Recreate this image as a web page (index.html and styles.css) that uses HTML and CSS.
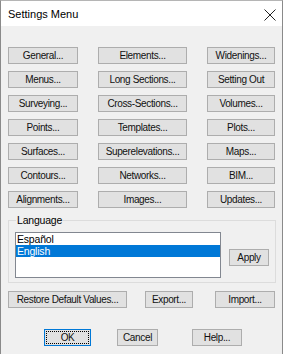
FILE: index.html
```html
<!DOCTYPE html>
<html lang="en">
<head>
    <meta charset="UTF-8">
    <title>Settings Menu</title>
    <link rel="stylesheet" href="styles.css">
</head>
<body>
    <div class="window">
        <div class="titlebar">
            <span class="title">Settings Menu</span>
            <svg class="close" width="12" height="12" viewBox="0 0 12 12">
                <path d="M0.5 0.5 L11.5 11.5 M11.5 0.5 L0.5 11.5" stroke="#222" stroke-width="1" fill="none"/>
            </svg>
        </div>

        <div class="content">
            <div class="menu-grid">
                <button class="btn">General...</button>
                <button class="btn">Elements...</button>
                <button class="btn">Widenings...</button>
                <button class="btn">Menus...</button>
                <button class="btn">Long Sections...</button>
                <button class="btn">Setting Out</button>
                <button class="btn">Surveying...</button>
                <button class="btn">Cross-Sections...</button>
                <button class="btn">Volumes...</button>
                <button class="btn">Points...</button>
                <button class="btn">Templates...</button>
                <button class="btn">Plots...</button>
                <button class="btn">Surfaces...</button>
                <button class="btn">Superelevations...</button>
                <button class="btn">Maps...</button>
                <button class="btn">Contours...</button>
                <button class="btn">Networks...</button>
                <button class="btn">BIM...</button>
                <button class="btn">Alignments...</button>
                <button class="btn">Images...</button>
                <button class="btn">Updates...</button>
            </div>

            <fieldset class="group">
                <legend>Language</legend>
                <div class="group-body">
                    <div class="listbox">
                        <div class="item">Español</div>
                        <div class="item selected">English</div>
                    </div>
                    <button class="btn apply">Apply</button>
                </div>
            </fieldset>

            <div class="row-tools">
                <button class="btn restore">Restore Default Values...</button>
                <button class="btn export">Export...</button>
                <button class="btn import">Import...</button>
            </div>

            <div class="row-actions">
                <button class="btn ok">OK</button>
                <button class="btn cancel">Cancel</button>
                <button class="btn help">Help...</button>
            </div>
        </div>
    </div>
</body>
</html>
```

FILE: styles.css
```css
body {
    margin: 0;
    background: #ffffff;
    font-family: 'Liberation Sans', Arial, sans-serif;
    font-size: 10px;
    color: #000;
}

.window {
    width: 281px;
    height: 353px;
    border: 1px solid #8a8a8a;
    border-top-color: #b5b5b5;
    background: #f0f0f0;
}

.titlebar {
    height: 25px;
    background: #ffffff;
    display: flex;
    align-items: center;
    justify-content: space-between;
    padding: 0 6px 0 7px;
}

.title {
    font-size: 11px;
    margin-top: 1px;
}

.close {
    margin-top: 2px;
}

.content {
    padding: 21px 6px 0 7px;
}

.btn {
    font-family: inherit;
    font-size: 10px;
    height: 17px;
    padding: 0;
    background: #e1e1e1;
    border: 1px solid #adadad;
    color: #111;
    letter-spacing: -0.35px;
}

.menu-grid {
    display: grid;
    grid-template-columns: 70px 89px 68px;
    grid-auto-rows: 17px;
    column-gap: 20px;
    row-gap: 7px;
}

.group {
    margin: 6px 0 0 0;
    padding: 0 6px 4px 6px;
    width: 268px;
    box-sizing: border-box;
    border: 1px solid #dcdcdc;
}

.group legend {
    padding: 0 1px;
    margin-left: 1px;
    line-height: 12px;
    font-size: 10.5px;
    letter-spacing: -0.2px;
}

.group-body {
    display: flex;
    align-items: flex-start;
    padding-top: 6px;
}

.listbox {
    width: 206px;
    height: 46px;
    box-sizing: border-box;
    border: 1px solid #828790;
    background: #ffffff;
    font-size: 10.5px;
    letter-spacing: -0.2px;
}

.item {
    height: 12px;
    line-height: 12px;
    padding-left: 1px;
}

.item.selected {
    background: #0078d7;
    color: #ffffff;
}

.apply {
    width: 40px;
    margin: 17px 0 0 8px;
}

.row-tools {
    display: flex;
    margin-top: 8px;
}

.restore { width: 119px; }
.export { width: 48px; margin-left: 18px; }
.import { width: 60px; margin-left: 22px; }

.row-actions {
    display: flex;
    margin-top: 21px;
    padding-left: 36px;
}

.ok {
    width: 47px;
    border-color: #0078d7;
    outline: 1px dotted #000;
    outline-offset: -3px;
}
.cancel { width: 41px; margin-left: 26px; }
.help { width: 50px; margin-left: 34px; }
```
